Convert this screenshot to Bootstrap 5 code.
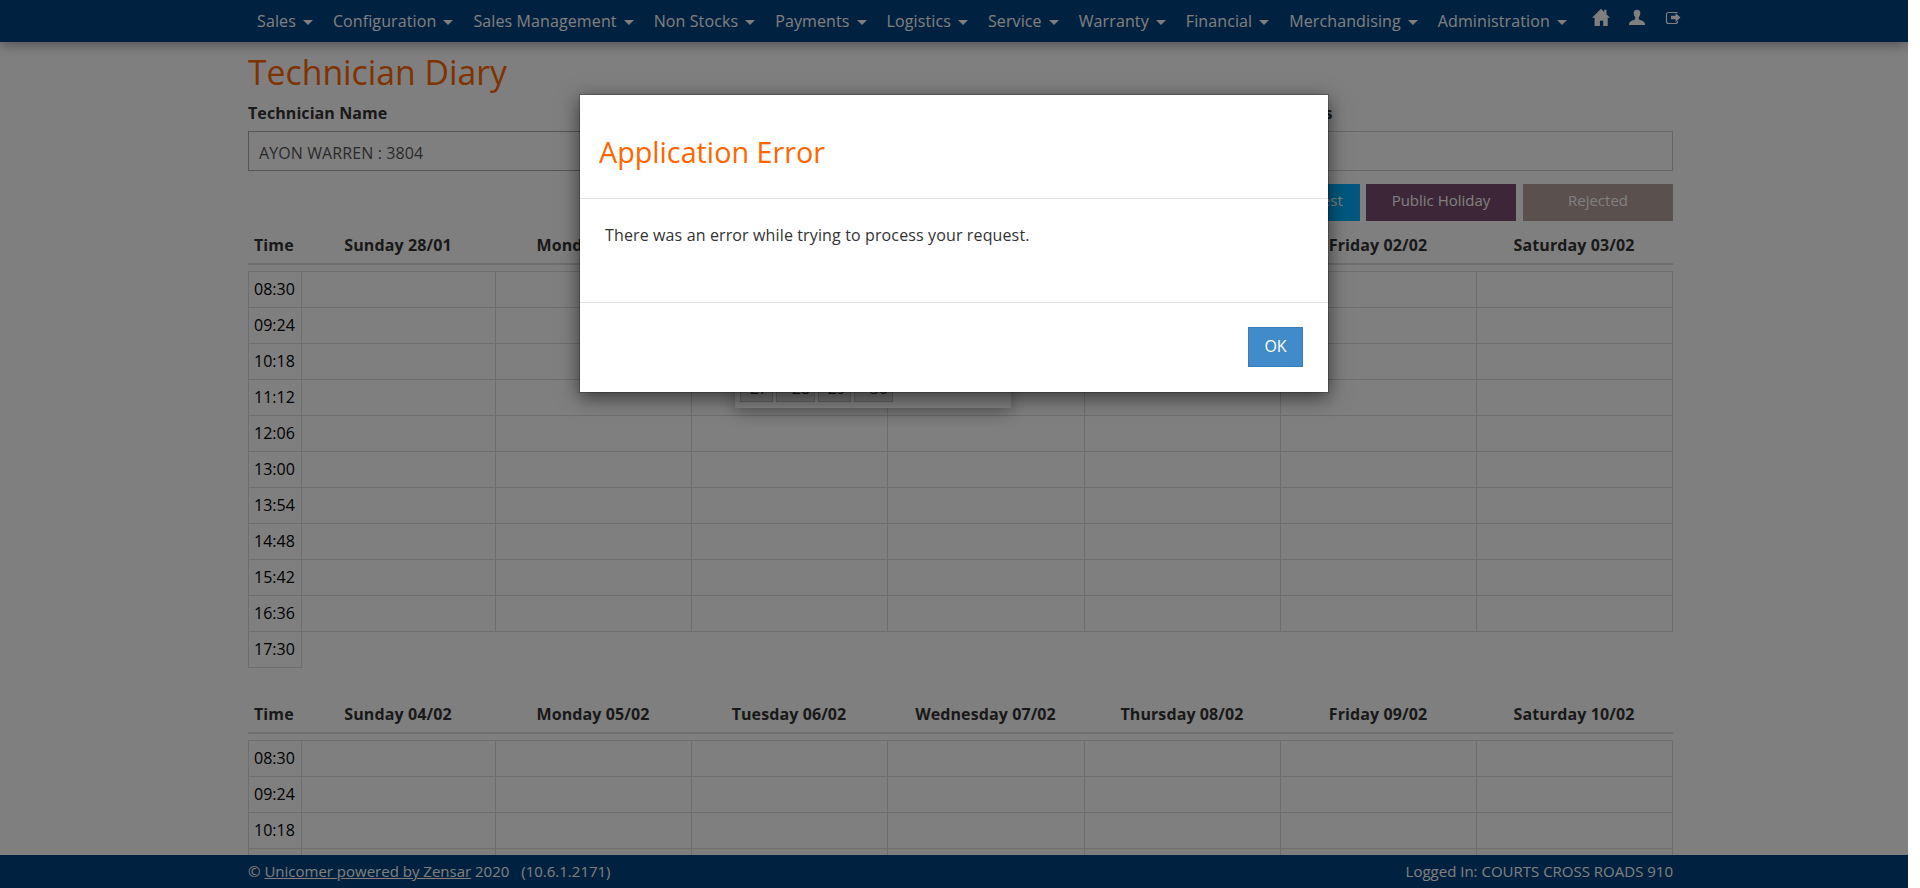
<!DOCTYPE html>
<html lang="en">
<head>
<meta charset="utf-8">
<meta name="viewport" content="width=device-width, initial-scale=1">
<title>Technician Diary</title>
<link href="https://cdn.jsdelivr.net/npm/bootstrap@5.3.0/dist/css/bootstrap.min.css" rel="stylesheet">
<style>
  body { font-family: "Open Sans", "Noto Sans", sans-serif; font-size: 16px; color: #333; background: #fff; overflow: hidden; }
  .app-shell { width: 1908px; height: 888px; }
  .top-nav { height: 42px; background: #00427f; padding: 0 0 0 247px; box-shadow: 0 2px 14px rgba(0,0,0,.4); z-index: 5; }
  .top-nav .nav-link { color: #fff; padding: 0 10px; line-height: 42px; letter-spacing: .112px; }
  .top-nav .dropdown-toggle::after { margin-left: 7px; border-top: 5px solid; border-left: 5px solid transparent; border-right: 5px solid transparent; vertical-align: 2px; }
  .nav-icons { padding: 8px 0 0 15px; color: #fff; }
  .page-body { padding: 0 235px 0 248px; min-height: 0; }
  .page-title { font-size: 33.75px; line-height: 60px; color: #f60; font-weight: 400; }
  .field-label { line-height: 22px; margin-bottom: 7px; font-weight: 700; letter-spacing: .08px; }
  .field-box { height: 40px; border: 1px solid #aaa; border-radius: 0; padding: 5px 10px 0; line-height: 32px; color: #555; letter-spacing: .1px; }
  .field-box.plain { border-color: #ccc; }
  .field-main { width: 700px; }
  .field-side { width: 479px; }
  .legend-row { gap: 6px; margin-top: 13px; }
  .legend-tag { width: 150px; height: 37px; padding-top: 5px; line-height: 22px; font-size: 15px; color: #fff; }
  .tag-request { background: #00b0ff; }
  .tag-holiday { background: #784c6e; margin-right: 1px; }
  .tag-rejected { background: #b4a09a; }
  .diary { table-layout: fixed; border-collapse: separate; border-spacing: 0; width: 1425px; color: #000; }
  .diary th { height: 44px; padding: 12px 2px 6px 0; line-height: 24px; text-align: center; color: #333; border-bottom: 2px solid #ddd; font-weight: 700; letter-spacing: .1px; }
  .diary th:first-child { text-align: left; padding-left: 6px; }
  .diary tbody::before { content: ""; display: table-row; height: 6px; }
  .diary td { height: 36px; padding: 0 0 1px; line-height: 34px; border: solid #ddd; border-width: 0 1px 1px 0; }
  .diary td:first-child { border-left-width: 1px; padding-left: 5px; }
  .diary tr:first-child td { border-top-width: 1px; height: 37px; }
  .diary + .diary { margin-top: 22px; }
  .page-footer { height: 33px; background: #00427f; color: #fff; font-size: 15px; line-height: 33px; padding: 0 235px 0 248px; z-index: 5; }
  .calendar-pop { left: 735px; top: 180px; width: 276px; height: 228px; padding: 0 5px 6px; background: #fff; box-shadow: 0 5px 15px rgba(0,0,0,.3); }
  .cal-day { height: 25px; background: #e6e6e6; border: 1px solid #c5c5c5; text-align: right; padding-right: 4px; line-height: 20px; margin-right: 3px; width: 33px; }
  .cal-day.wide { width: 39px; }
  .error-layer { width: 1908px; height: 888px; }
  .error-layer.modal-backdrop { opacity: .5; }
  .error-layer .modal-dialog { max-width: 750px; width: 750px; margin: 94px auto 0; }
  .error-layer .modal-content { border: 1px solid rgba(0,0,0,.2); border-radius: 0; box-shadow: 0 5px 18px rgba(0,0,0,.55); color: #333; background-clip: padding-box; }
  .error-layer .modal-header { height: 104px; padding: 37px 19px 0; border-bottom: 1px solid #e5e5e5; border-radius: 0; }
  .error-layer .modal-title { font-size: 28.75px; line-height: 40px; color: #f60; font-weight: 400; }
  .error-layer .modal-body { flex: none; height: 103px; padding: 24px 25px 0; line-height: 24px; letter-spacing: .13px; }
  .error-layer .modal-footer { height: 90px; padding: 0 25px 1px; border-top: 1px solid #e5e5e5; border-radius: 0; }
  .btn-ok { width: 55px; height: 40px; margin: 0; padding: 0 0 2px; border-radius: 0; color: #fff; background: #428bca; border: 1px solid #357ebd; }
</style>
<script src="https://cdn.jsdelivr.net/npm/bootstrap@5.3.0/dist/js/bootstrap.bundle.min.js"></script>
</head>
<body>
<div class="app-shell position-relative d-flex flex-column overflow-hidden">
  <nav class="top-nav position-relative d-flex align-items-start flex-shrink-0">
    <ul class="nav flex-nowrap text-nowrap">
      <li class="nav-item"><a class="nav-link dropdown-toggle" href="#">Sales</a></li>
      <li class="nav-item"><a class="nav-link dropdown-toggle" href="#">Configuration</a></li>
      <li class="nav-item"><a class="nav-link dropdown-toggle" href="#">Sales Management</a></li>
      <li class="nav-item"><a class="nav-link dropdown-toggle" href="#">Non Stocks</a></li>
      <li class="nav-item"><a class="nav-link dropdown-toggle" href="#">Payments</a></li>
      <li class="nav-item"><a class="nav-link dropdown-toggle" href="#">Logistics</a></li>
      <li class="nav-item"><a class="nav-link dropdown-toggle" href="#">Service</a></li>
      <li class="nav-item"><a class="nav-link dropdown-toggle" href="#">Warranty</a></li>
      <li class="nav-item"><a class="nav-link dropdown-toggle" href="#">Financial</a></li>
      <li class="nav-item"><a class="nav-link dropdown-toggle" href="#">Merchandising</a></li>
      <li class="nav-item"><a class="nav-link dropdown-toggle" href="#">Administration</a></li>
    </ul>
    <div class="nav-icons d-flex">
      <svg width="18" height="18" viewBox="0 0 18 18" fill="currentColor"><path d="M9 .8 12.200 4V1.800h2.300v4.500L18 9.800h-2.300V18h-4.500v-5.200H7.900V18H2.600V9.800H0z"/></svg>
      <svg class="ms-3" width="22" height="18" viewBox="-2 0 22 18" fill="currentColor"><path d="M9 1.800c2.400 0 3.500 1.500 3.300 3.600-.1 1.900-.8 2.900-1.500 3.800v1.700c0 1.100 6.200 1.500 6.200 5.100v1H1v-1c0-3.600 6.200-4 6.200-5.100V9.200C6.500 8.300 5.800 7.300 5.700 5.400 5.500 3.300 6.600 1.800 9 1.800z"/></svg>
      <svg class="ms-3" width="20" height="18" viewBox="-2 0 20 18"><path d="M11.500 4.500h-9a2 2 0 0 0-2 2v7a2 2 0 0 0 2 2h7a2 2 0 0 0 2-2v-.5" fill="none" stroke="currentColor" stroke-width="1.200"/><path d="M5 7.700h4.500V5l5 4.500-5 4.500v-2.700H5z" fill="currentColor"/></svg>
    </div>
  </nav>

  <main class="page-body flex-grow-1 overflow-hidden">
    <h1 class="page-title m-0">Technician Diary</h1>
    <div class="d-flex justify-content-between">
      <div class="field-main">
        <label class="field-label d-block">Technician Name</label>
        <div class="field-box">AYON WARREN : 3804</div>
      </div>
      <div class="field-side">
        <label class="field-label d-block">Outstanding Jobs</label>
        <div class="field-box plain"></div>
      </div>
    </div>
    <div class="legend-row d-flex justify-content-end text-center">
      <div class="legend-tag tag-request">Internal Request</div>
      <div class="legend-tag tag-holiday">Public Holiday</div>
      <div class="legend-tag tag-rejected">Rejected</div>
    </div>
    <div id="weeks"></div>
  </main>

  <footer class="page-footer position-relative d-flex justify-content-between flex-shrink-0">
    <div>© <a class="text-white text-decoration-underline" href="#">Unicomer powered by Zensar</a> 2020 <span class="ms-2">(10.6.1.2171)</span></div>
    <div>Logged In: COURTS CROSS ROADS 910</div>
  </footer>

  <div class="calendar-pop position-absolute d-flex align-items-end">
    <div class="cal-day">27</div>
    <div class="cal-day wide">28</div>
    <div class="cal-day">29</div>
    <div class="cal-day wide">30</div>
  </div>

  <div class="error-layer modal-backdrop position-absolute"></div>
  <div class="error-layer modal d-block position-absolute overflow-hidden" tabindex="-1" role="dialog">
    <div class="modal-dialog">
      <div class="modal-content">
        <div class="modal-header align-items-start"><h2 class="modal-title">Application Error</h2></div>
        <div class="modal-body">There was an error while trying to process your request.</div>
        <div class="modal-footer"><button class="btn btn-ok" type="button">OK</button></div>
      </div>
    </div>
  </div>
</div>
<script>
  const times = ["08:30", "09:24", "10:18", "11:12", "12:06", "13:00", "13:54", "14:48", "15:42", "16:36", "17:30"];
  const weeks = [
    { rows: 11, days: ["Sunday 28/01", "Monday 29/01", "Tuesday 30/01", "Wednesday 31/01", "Thursday 01/02", "Friday 02/02", "Saturday 03/02"] },
    { rows: 4, days: ["Sunday 04/02", "Monday 05/02", "Tuesday 06/02", "Wednesday 07/02", "Thursday 08/02", "Friday 09/02", "Saturday 10/02"] }
  ];
  const widths = [54, 194, 196, 196, 197, 196, 196, 196];
  document.getElementById("weeks").innerHTML = weeks.map(({ rows, days }) =>
    `<table class="diary"><colgroup>${widths.map(w => `<col style="width:${w}px">`).join("")}</colgroup>
     <thead><tr><th>Time</th>${days.map(d => `<th>${d}</th>`).join("")}</tr></thead>
     <tbody>${times.slice(0, rows).map((t, i) => `<tr><td>${t}</td>${i < 10 ? "<td></td>".repeat(7) : ""}</tr>`).join("")}</tbody></table>`
  ).join("");
</script>
</body>
</html>
